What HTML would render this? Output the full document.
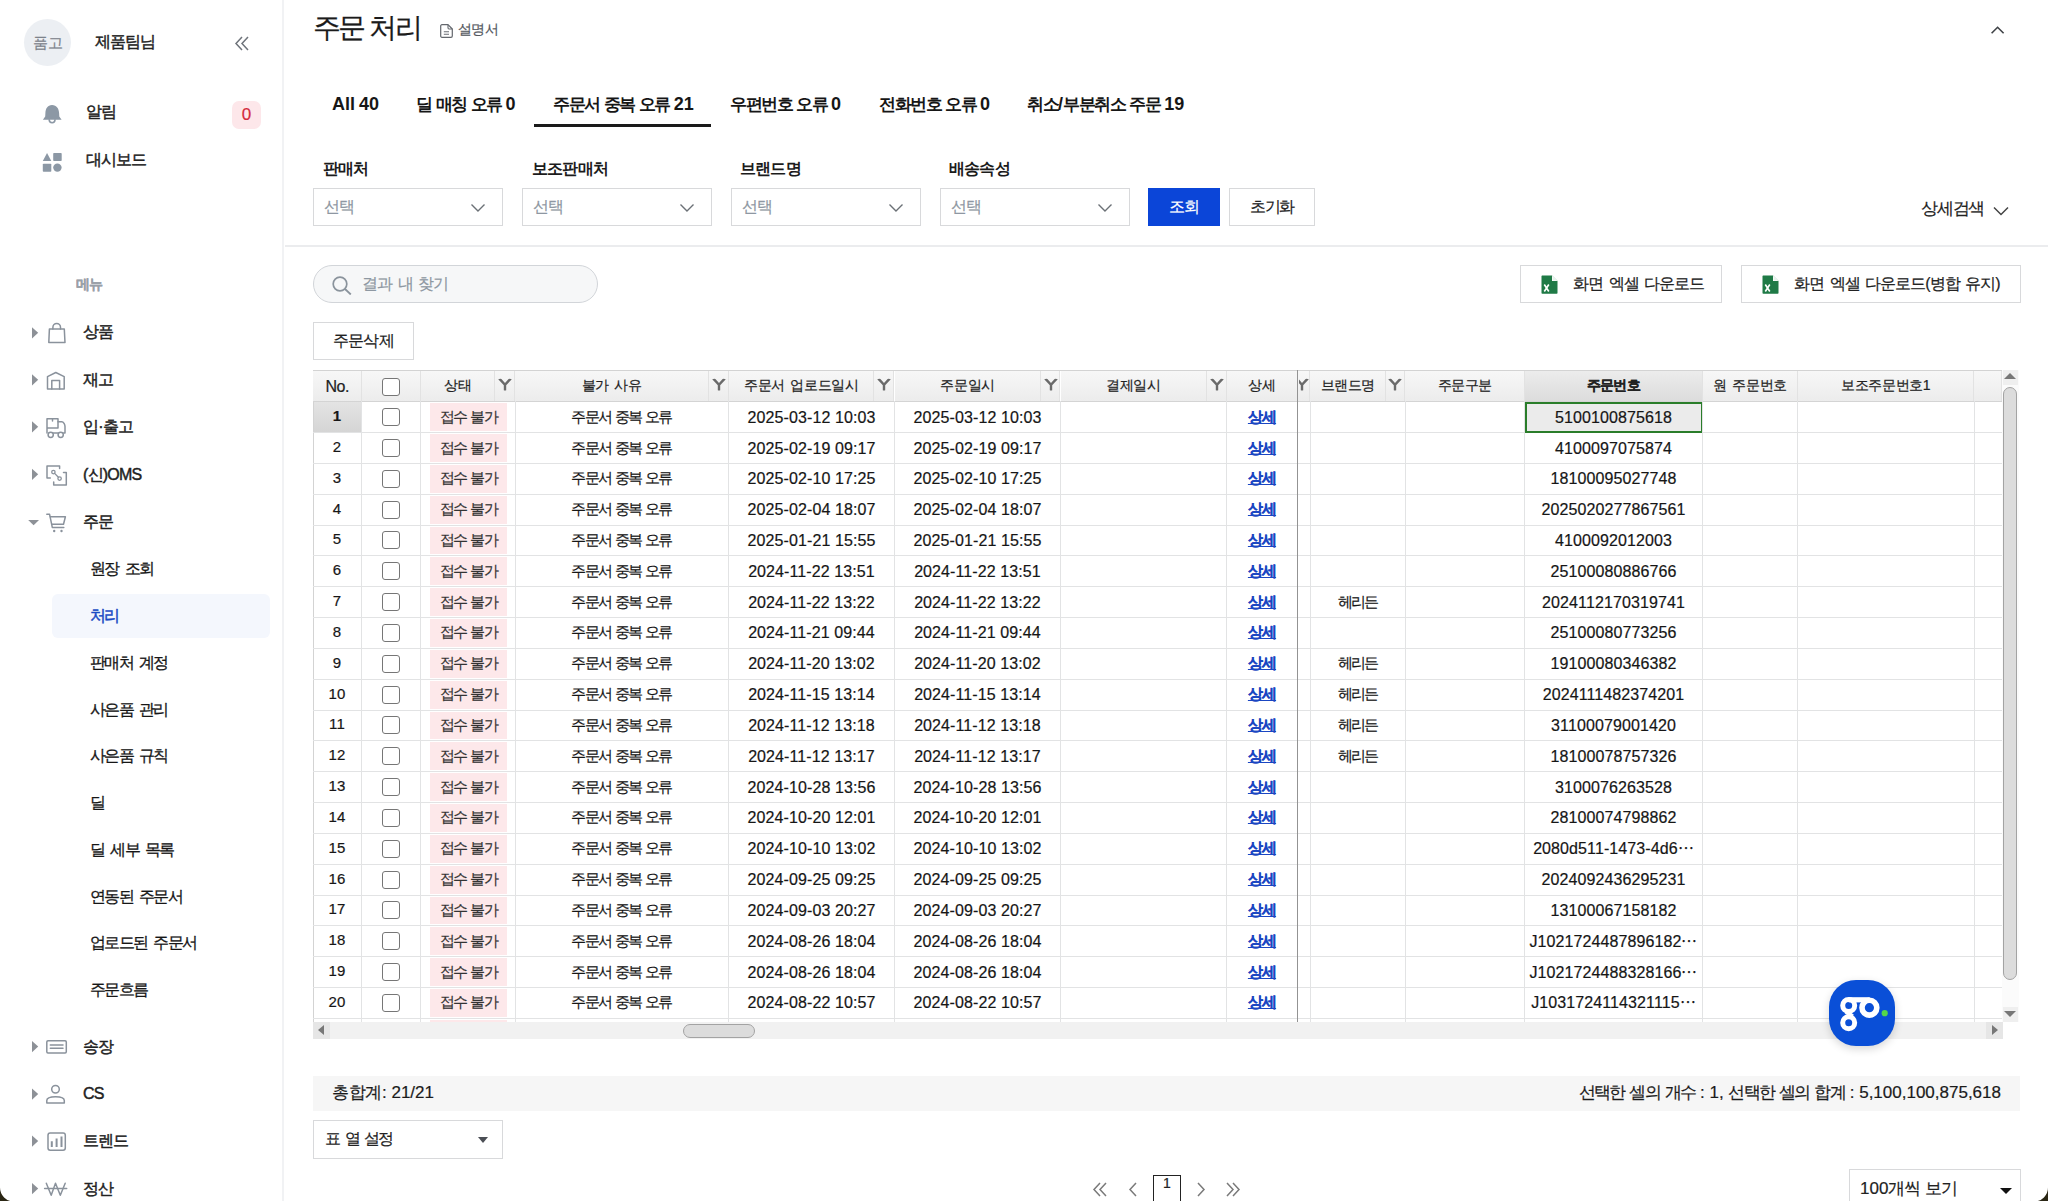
<!DOCTYPE html>
<html lang="ko"><head><meta charset="utf-8"><title>주문 처리</title>
<style>
*{box-sizing:border-box;margin:0;padding:0}
html,body{width:2048px;height:1201px;overflow:hidden;background:#fff}
body{font-family:"Liberation Sans",sans-serif;color:#1d1d1f;position:relative;-webkit-text-stroke:0.2px currentColor}
.a{position:absolute;white-space:nowrap}
.ko{letter-spacing:-0.06em}
.sb{position:absolute;left:0;top:0;width:284px;height:1201px;background:#fff;border-right:2px solid #f1f2f4}
.mi{position:absolute;-webkit-text-stroke:0.45px #222;left:83px;font-size:16px;font-weight:normal;color:#222;letter-spacing:-0.05em;line-height:20px}
.si{position:absolute;-webkit-text-stroke:0.3px currentColor;left:90px;font-size:16px;color:#161616;letter-spacing:-0.1em;word-spacing:3px;line-height:20px}
.tri{position:absolute;left:32px;width:0;height:0;border-top:5.5px solid transparent;border-bottom:5.5px solid transparent;border-left:6px solid #8b8f96}
.ic{position:absolute;left:45px}
.tab{position:absolute;-webkit-text-stroke:0;top:93px;font-size:18px;font-weight:bold;color:#161616;line-height:22px;word-spacing:-1px}
.lbl{position:absolute;-webkit-text-stroke:0;top:159px;font-size:16px;font-weight:bold;color:#1b1b1b;letter-spacing:-0.05em;line-height:20px}
.sel{position:absolute;top:188px;width:190px;height:38px;border:1.5px solid #d8d9db;background:#fff}
.sel span{position:absolute;left:10px;top:8px;font-size:16px;color:#8e97a2;letter-spacing:-0.05em;line-height:20px}
.sel svg{position:absolute;right:16px;top:14px}
.btn{position:absolute;border:1.5px solid #d8d9db;background:#fff;font-size:16px;color:#222;letter-spacing:-0.06em;word-spacing:2px;text-align:center}
.hc{position:absolute;top:371px;height:30px;background:linear-gradient(#f7f7f7,#ececec);border-right:1px solid #e2e2e2}
.ht{position:absolute;top:376px;font-size:14px;color:#222;letter-spacing:-0.03em;word-spacing:2px;line-height:18px;text-align:center}
.flt{position:absolute;top:378px}
.vl{position:absolute;width:1px;background:#e2e3e4}
.hl{position:absolute;height:1px;background:#e2e3e4}
.cb{position:absolute;width:18px;height:18px;border:1.3px solid #767676;border-radius:3px;background:#fff}
.bdg{position:absolute;left:430px;width:77px;background:#fde8ea}
.td{position:absolute;font-size:15px;color:#161616;letter-spacing:-0.113em;word-spacing:1px;line-height:18px;text-align:center}
.dt{position:absolute;font-size:16px;color:#161616;line-height:18px;text-align:center;letter-spacing:0.1px;margin-top:1px}
.lnk{position:absolute;left:1226px;width:72px;text-align:center;font-size:15px;font-weight:bold;color:#1a46c2;text-decoration:underline;letter-spacing:-0.06em;line-height:18px}
</style></head><body>

<div class="sb">
<div class="a" style="left:24px;top:19px;width:47px;height:47px;border-radius:50%;background:#eceff3"></div>
<div class="a" style="left:24px;top:33px;width:47px;text-align:center;font-size:15px;color:#7d838b;letter-spacing:-0.05em;line-height:20px">품고</div>
<div class="a" style="-webkit-text-stroke:0.45px #222;left:95px;top:32px;font-size:16px;color:#222;letter-spacing:-0.07em;line-height:20px">제품팀님</div>
<svg class="a" style="left:234px;top:36px" width="16" height="15" viewBox="0 0 16 15"><path d="M8 1 L2 7.5 L8 14 M14 1 L8 7.5 L14 14" fill="none" stroke="#6f747b" stroke-width="1.5"/></svg>
<div class="a" style="-webkit-text-stroke:0.45px #222;left:86px;top:102px;font-size:16px;color:#222;letter-spacing:-0.07em;line-height:20px">알림</div>
<div class="a" style="left:232px;top:101px;width:29px;height:28px;border-radius:7px;background:#fde7ea;color:#d42a3c;font-size:17px;text-align:center;line-height:28px">0</div>
<div class="a" style="-webkit-text-stroke:0.45px #222;left:86px;top:150px;font-size:16px;color:#222;letter-spacing:-0.07em;line-height:20px">대시보드</div>
<div class="a" style="left:76px;top:275px;font-size:14px;font-weight:bold;color:#9aa0a8;letter-spacing:-0.05em;line-height:18px">메뉴</div>
<div class="mi" style="top:322px">상품</div>
<div class="mi" style="top:370px">재고</div>
<div class="mi" style="top:417px">입·출고</div>
<div class="mi" style="top:465px">(신)OMS</div>
<div class="mi" style="top:512px">주문</div>
<div class="a" style="left:52px;top:594px;width:218px;height:44px;border-radius:6px;background:#f4f7fd"></div>
<div class="si" style="top:558.5px">원장 조회</div>
<div class="si" style="top:605.5px;color:#1a4cc4;-webkit-text-stroke:0.5px #1a4cc4">처리</div>
<div class="si" style="top:652.5px">판매처 계정</div>
<div class="si" style="top:699.5px">사은품 관리</div>
<div class="si" style="top:745.5px">사은품 규칙</div>
<div class="si" style="top:792.5px">딜</div>
<div class="si" style="top:839.5px">딜 세부 목록</div>
<div class="si" style="top:886.5px">연동된 주문서</div>
<div class="si" style="top:932.5px">업로드된 주문서</div>
<div class="si" style="top:979.5px">주문흐름</div>
<div class="mi" style="top:1037px">송장</div>
<div class="mi" style="top:1084px">CS</div>
<div class="mi" style="top:1131px">트렌드</div>
<div class="mi" style="top:1179px">정산</div>
<svg class="a" style="left:0;top:0" width="284" height="1201" viewBox="0 0 284 1201" fill="none" stroke="#8a929c" stroke-width="1.5" stroke-linejoin="round" stroke-linecap="round">
<g stroke="none" fill="#8c98a5">
<path d="M52 105 C47.5 105 45.6 108.8 45.4 113 L45.2 116.6 L42.9 119.8 L61.6 119.8 L59.3 116.6 L59.1 113 C58.9 108.8 56.7 105 52 105 Z"/>
<path d="M42.8 161 L47.05 153 L51.3 161 Z"/>
<rect x="53.2" y="153" width="8.5" height="8" rx="0.8"/>
<rect x="42.8" y="163.7" width="8.5" height="8" rx="0.8"/>
<circle cx="57.4" cy="167.6" r="4.2"/>
</g>
<path d="M49.2 119.8 A2.9 2.9 0 0 0 55 119.8" stroke="#8c98a5" stroke-width="1.6"/>
<g stroke="none"><path d="M32 327.2 L38.2 332.79999999999995 L32 338.4 Z" fill="#8d9197"/><path d="M32 374.2 L38.2 379.79999999999995 L32 385.4 Z" fill="#8d9197"/><path d="M32 421.2 L38.2 426.79999999999995 L32 432.4 Z" fill="#8d9197"/><path d="M32 468.7 L38.2 474.29999999999995 L32 479.9 Z" fill="#8d9197"/><path d="M32 1041 L38.2 1046.6 L32 1052.2 Z" fill="#8d9197"/><path d="M32 1088.5 L38.2 1094.1 L32 1099.7 Z" fill="#8d9197"/><path d="M32 1135.5 L38.2 1141.1 L32 1146.7 Z" fill="#8d9197"/><path d="M32 1183 L38.2 1188.6 L32 1194.2 Z" fill="#8d9197"/>
<path d="M28.2 520 L39 520 L33.6 525.2 Z" fill="#8d9197"/></g>
<path d="M49.4 329 L64.3 329 L65 342.6 L48.8 342.6 Z"/>
<path d="M52.9 329 L52.9 327.2 A3.8 3.8 0 0 1 60.5 327.2 L60.5 329"/>
<path d="M47.5 389 L47.5 376.6 L55.8 372.5 L64.2 376.6 L64.2 389 Z"/>
<path d="M51.8 389 L51.8 380.5 L59.6 380.5 L59.6 389"/>
<path d="M47 433 L47 418.8 L58 418.8 L58 428 L47 428"/>
<path d="M52.5 418.8 L52.5 421"/>
<path d="M58 421.8 L61.8 421.8 C63.5 421.8 65 424.5 65 426.5 L65 433 L63.6 433"/>
<path d="M53.4 433 L58 433"/>
<circle cx="50.7" cy="434.8" r="2.6"/>
<circle cx="60.7" cy="434.8" r="2.6"/>
<path d="M50.3 478 L47 478 L47 466 L59.6 466 L59.6 468.5"/>
<path d="M63.5 472.4 L66.3 472.4 L66.3 485 L53.7 485 L53.7 482"/>
<circle cx="53.4" cy="472.1" r="1.7" stroke-width="1.3"/>
<circle cx="59.6" cy="478.6" r="1.7" stroke-width="1.3"/>
<path d="M54.6 473.4 L58.4 477.3" stroke-width="1.3"/>
<path d="M46.8 514.3 L49.6 514.3 L52.3 527.4 L63.8 527.4"/>
<path d="M50.3 516.8 L65.4 516.8 L63.5 524.2 L51.8 524.2"/>
<circle cx="54.2" cy="531" r="1.2" fill="#8a929c" stroke="none"/>
<circle cx="61.5" cy="531" r="1.2" fill="#8a929c" stroke="none"/>
<rect x="46.8" y="1040.7" width="19.5" height="12.3" rx="1.2"/>
<path d="M50.3 1044.9 L63 1044.9 M50.3 1048.3 L63 1048.3"/>
<circle cx="55.5" cy="1089.3" r="3.8"/>
<path d="M46.8 1103 L46.8 1100.5 C46.8 1097.8 50 1096.7 55.6 1096.7 C61.2 1096.7 64.3 1097.8 64.3 1100.5 L64.3 1103 Z"/>
<rect x="48" y="1133" width="17.3" height="17.3" rx="2.2"/>
<path d="M51.8 1147 L51.8 1141.3 M56.6 1147 L56.6 1138.5 M61.5 1147 L61.5 1136.5" stroke-width="2" stroke-linecap="butt"/>
<path d="M46.3 1183.3 L51.2 1195.2 L55.5 1183.3 L60.3 1195.2 L65.2 1183.3"/>
<path d="M44.6 1188.6 L66.7 1188.6"/>
</svg>
</div>
<div class="a" style="left:313px;top:12px;font-size:28px;color:#1b1b1b;letter-spacing:-0.1em;word-spacing:1px;line-height:32px">주문 처리</div>
<svg class="a" style="left:440px;top:24px" width="13" height="14" viewBox="0 0 13 14"><path d="M0.7 2 C0.7 1.2 1.2 0.7 2 0.7 L8 0.7 L12.3 5 L12.3 12 C12.3 12.8 11.8 13.3 11 13.3 L2 13.3 C1.2 13.3 0.7 12.8 0.7 12 Z" fill="none" stroke="#63676d" stroke-width="1.2" stroke-linejoin="round"/><path d="M8 0.7 L8 3.8 C8 4.4 8.4 5 9 5 L12.3 5" fill="none" stroke="#63676d" stroke-width="1.1"/><path d="M3.8 7.8 L9 7.8 M3.8 10.2 L9 10.2" stroke="#6a6e74" stroke-width="1.1"/></svg>
<div class="a" style="left:458px;top:20px;font-size:14px;color:#55595f;letter-spacing:-0.05em;line-height:18px">설명서</div>
<svg class="a" style="left:1990px;top:25px" width="16" height="10" viewBox="0 0 16 10"><path d="M1.6 8.3 L7.6 2.3 L13.6 8.3" fill="none" stroke="#3f4246" stroke-width="1.6"/></svg>
<div class="tab" style="left:332px">All 40</div>
<div class="tab" style="left:416px"><span style="letter-spacing:-0.09em;font-size:16.5px">딜</span> <span style="letter-spacing:-0.09em;font-size:16.5px">매칭</span> <span style="letter-spacing:-0.09em;font-size:16.5px">오류</span> 0</div>
<div class="tab" style="left:553px"><span style="letter-spacing:-0.09em;font-size:16.5px">주문서</span> <span style="letter-spacing:-0.09em;font-size:16.5px">중복</span> <span style="letter-spacing:-0.09em;font-size:16.5px">오류</span> 21</div>
<div class="tab" style="left:730px"><span style="letter-spacing:-0.09em;font-size:16.5px">우편번호</span> <span style="letter-spacing:-0.09em;font-size:16.5px">오류</span> 0</div>
<div class="tab" style="left:879px"><span style="letter-spacing:-0.09em;font-size:16.5px">전화번호</span> <span style="letter-spacing:-0.09em;font-size:16.5px">오류</span> 0</div>
<div class="tab" style="left:1027px"><span style="letter-spacing:-0.09em;font-size:16.5px">취소</span>/<span style="letter-spacing:-0.09em;font-size:16.5px">부분취소</span> <span style="letter-spacing:-0.09em;font-size:16.5px">주문</span> 19</div>
<div class="a" style="left:534px;top:124px;width:177px;height:3px;background:#1a1a1a"></div>
<div class="lbl" style="left:323px">판매처</div>
<div class="lbl" style="left:532px">보조판매처</div>
<div class="lbl" style="left:740px">브랜드명</div>
<div class="lbl" style="left:949px">배송속성</div>
<div class="sel" style="left:313px"><span>선택</span><svg width="16" height="10" viewBox="0 0 16 10"><path d="M1.5 1.5 L8 8 L14.5 1.5" fill="none" stroke="#6b7076" stroke-width="1.4"/></svg></div>
<div class="sel" style="left:522px"><span>선택</span><svg width="16" height="10" viewBox="0 0 16 10"><path d="M1.5 1.5 L8 8 L14.5 1.5" fill="none" stroke="#6b7076" stroke-width="1.4"/></svg></div>
<div class="sel" style="left:731px"><span>선택</span><svg width="16" height="10" viewBox="0 0 16 10"><path d="M1.5 1.5 L8 8 L14.5 1.5" fill="none" stroke="#6b7076" stroke-width="1.4"/></svg></div>
<div class="sel" style="left:940px"><span>선택</span><svg width="16" height="10" viewBox="0 0 16 10"><path d="M1.5 1.5 L8 8 L14.5 1.5" fill="none" stroke="#6b7076" stroke-width="1.4"/></svg></div>
<div class="a" style="left:1148px;top:188px;width:72px;height:38px;background:#0b45d8;color:#fff;font-size:16px;text-align:center;line-height:38px;letter-spacing:-0.05em">조회</div>
<div class="btn" style="left:1229px;top:188px;width:86px;height:38px;line-height:35px;letter-spacing:-0.1em">초기화</div>
<div class="a" style="left:1921px;top:199px;font-size:17px;color:#222;letter-spacing:-0.07em;line-height:20px">상세검색</div>
<svg class="a" style="left:1993px;top:206px" width="16" height="10" viewBox="0 0 16 10"><path d="M1 1.5 L8 8.5 L15 1.5" fill="none" stroke="#444" stroke-width="1.5"/></svg>
<div class="a" style="left:285px;top:245px;width:1763px;height:2px;background:#ebecee"></div>
<div class="a" style="left:313px;top:265px;width:285px;height:38px;border-radius:19px;border:1.5px solid #d2d5d9;background:#f6f7f8"></div>
<svg class="a" style="left:332px;top:276px" width="20" height="19" viewBox="0 0 20 19"><circle cx="8" cy="8" r="6.8" fill="none" stroke="#8a939c" stroke-width="1.7"/><path d="M13 13 L18.8 18.5" stroke="#8a939c" stroke-width="1.8"/></svg>
<div class="a" style="left:362px;top:274px;font-size:16px;color:#8e98a2;letter-spacing:-0.08em;word-spacing:3px;line-height:20px">결과 내 찾기</div>
<div class="btn" style="left:1520px;top:265px;width:202px;height:38px"><div class="a" style="left:20px;top:9px"><svg width="17" height="19" viewBox="0 0 17 19"><path d="M1.5 0.5 L11 0.5 L16.5 6 L16.5 18 C16.5 18.5 16.2 18.8 15.7 18.8 L1.3 18.8 C0.8 18.8 0.5 18.5 0.5 18 L0.5 1.5 C0.5 0.9 0.9 0.5 1.5 0.5 Z" fill="#1f7a46"/><path d="M11 0.5 L11 6 L16.5 6 Z" fill="#fff"/><path d="M11.6 0.5 L16.5 5.4 L11.6 5.4 Z" fill="#e8f2ec"/><path d="M3.3 9.5 L7.8 16.5 M7.8 9.5 L3.3 16.5" stroke="#fff" stroke-width="1.6"/></svg></div><div class="a" style="left:52px;top:8px;line-height:20px">화면 엑셀 다운로드</div></div>
<div class="btn" style="left:1741px;top:265px;width:280px;height:38px"><div class="a" style="left:20px;top:9px"><svg width="17" height="19" viewBox="0 0 17 19"><path d="M1.5 0.5 L11 0.5 L16.5 6 L16.5 18 C16.5 18.5 16.2 18.8 15.7 18.8 L1.3 18.8 C0.8 18.8 0.5 18.5 0.5 18 L0.5 1.5 C0.5 0.9 0.9 0.5 1.5 0.5 Z" fill="#1f7a46"/><path d="M11 0.5 L11 6 L16.5 6 Z" fill="#fff"/><path d="M11.6 0.5 L16.5 5.4 L11.6 5.4 Z" fill="#e8f2ec"/><path d="M3.3 9.5 L7.8 16.5 M7.8 9.5 L3.3 16.5" stroke="#fff" stroke-width="1.6"/></svg></div><div class="a" style="left:52px;top:8px;line-height:20px">화면 엑셀 다운로드(병합 유지)</div></div>
<div class="btn" style="left:313px;top:322px;width:101px;height:38px;line-height:35px">주문삭제</div>
<div class="a" style="left:313px;top:370px;width:1690px;height:652px;border-left:1px solid #d3d3d3;border-top:1px solid #d3d3d3;overflow:hidden">
</div>
<div class="hc" style="left:313.0px;width:48.5px;background:linear-gradient(#f7f7f7,#ececec)"></div>
<div class="hc" style="left:361.5px;width:59.0px;background:linear-gradient(#f7f7f7,#ececec)"></div>
<div class="hc" style="left:420.5px;width:74.5px;background:linear-gradient(#f7f7f7,#ececec)"></div>
<div class="hc" style="left:495.0px;width:20.0px;background:linear-gradient(#f7f7f7,#ececec)"></div>
<div class="hc" style="left:515.0px;width:193.5px;background:linear-gradient(#f7f7f7,#ececec)"></div>
<div class="hc" style="left:708.5px;width:20.0px;background:linear-gradient(#f7f7f7,#ececec)"></div>
<div class="hc" style="left:728.5px;width:145.7px;background:linear-gradient(#f7f7f7,#ececec)"></div>
<div class="hc" style="left:874.2px;width:20.3px;background:linear-gradient(#f7f7f7,#ececec)"></div>
<div class="hc" style="left:894.5px;width:146.2px;background:linear-gradient(#f7f7f7,#ececec)"></div>
<div class="hc" style="left:1040.7px;width:19.8px;background:linear-gradient(#f7f7f7,#ececec)"></div>
<div class="hc" style="left:1060.5px;width:146.0px;background:linear-gradient(#f7f7f7,#ececec)"></div>
<div class="hc" style="left:1206.5px;width:20.0px;background:linear-gradient(#f7f7f7,#ececec)"></div>
<div class="hc" style="left:1226.5px;width:71.0px;background:linear-gradient(#f7f7f7,#ececec)"></div>
<div class="hc" style="left:1297.5px;width:12.5px;background:linear-gradient(#f7f7f7,#ececec)"></div>
<div class="hc" style="left:1310.0px;width:75.7px;background:linear-gradient(#f7f7f7,#ececec)"></div>
<div class="hc" style="left:1385.7px;width:19.3px;background:linear-gradient(#f7f7f7,#ececec)"></div>
<div class="hc" style="left:1405.0px;width:119.5px;background:linear-gradient(#f7f7f7,#ececec)"></div>
<div class="hc" style="left:1524.5px;width:178.0px;background:linear-gradient(#ececec,#dcdcdc)"></div>
<div class="hc" style="left:1702.5px;width:95.0px;background:linear-gradient(#f7f7f7,#ececec)"></div>
<div class="hc" style="left:1797.5px;width:176.5px;background:linear-gradient(#f7f7f7,#ececec)"></div>
<div class="hc" style="left:1974.0px;width:28.0px;background:linear-gradient(#f7f7f7,#ececec)"></div>
<div class="a" style="left:313px;top:400.5px;width:1689px;height:1px;background:#d4d4d4"></div>
<div class="ht" style="left:313px;width:48.5px;font-size:16px;margin-top:2px;">No.</div>
<div class="ht" style="left:420.5px;width:74.5px;">상태</div>
<div class="ht" style="left:515px;width:193.5px;">불가 사유</div>
<div class="ht" style="left:728.5px;width:145.7px;">주문서 업로드일시</div>
<div class="ht" style="left:894.5px;width:146.2px;">주문일시</div>
<div class="ht" style="left:1060.5px;width:146.0px;">결제일시</div>
<div class="ht" style="left:1226.5px;width:71.0px;">상세</div>
<div class="ht" style="left:1310px;width:75.7px;">브랜드명</div>
<div class="ht" style="left:1405px;width:119.5px;">주문구분</div>
<div class="ht" style="left:1524.5px;width:178.0px;font-weight:bold;letter-spacing:-0.06em;">주문번호</div>
<div class="ht" style="left:1702.5px;width:95.0px;">원 주문번호</div>
<div class="ht" style="left:1797.5px;width:176.5px;">보조주문번호1</div>
<svg class="flt" style="left:498.0px" width="14" height="14" viewBox="0 0 14 14"><path d="M0.2 1.3 Q1.8 0.5 3.4 0.9 L7 4.9 L10.6 0.9 Q12.2 0.5 13.8 1.3 L8.2 7.2 L8.2 12.2 Q7 12.8 5.8 12.2 L5.8 7.2 Z" fill="#6a6a6a"/></svg>
<svg class="flt" style="left:711.5px" width="14" height="14" viewBox="0 0 14 14"><path d="M0.2 1.3 Q1.8 0.5 3.4 0.9 L7 4.9 L10.6 0.9 Q12.2 0.5 13.8 1.3 L8.2 7.2 L8.2 12.2 Q7 12.8 5.8 12.2 L5.8 7.2 Z" fill="#6a6a6a"/></svg>
<svg class="flt" style="left:877.3px" width="14" height="14" viewBox="0 0 14 14"><path d="M0.2 1.3 Q1.8 0.5 3.4 0.9 L7 4.9 L10.6 0.9 Q12.2 0.5 13.8 1.3 L8.2 7.2 L8.2 12.2 Q7 12.8 5.8 12.2 L5.8 7.2 Z" fill="#6a6a6a"/></svg>
<svg class="flt" style="left:1043.6px" width="14" height="14" viewBox="0 0 14 14"><path d="M0.2 1.3 Q1.8 0.5 3.4 0.9 L7 4.9 L10.6 0.9 Q12.2 0.5 13.8 1.3 L8.2 7.2 L8.2 12.2 Q7 12.8 5.8 12.2 L5.8 7.2 Z" fill="#6a6a6a"/></svg>
<svg class="flt" style="left:1209.5px" width="14" height="14" viewBox="0 0 14 14"><path d="M0.2 1.3 Q1.8 0.5 3.4 0.9 L7 4.9 L10.6 0.9 Q12.2 0.5 13.8 1.3 L8.2 7.2 L8.2 12.2 Q7 12.8 5.8 12.2 L5.8 7.2 Z" fill="#6a6a6a"/></svg>
<svg class="flt" style="left:1388.3px" width="14" height="14" viewBox="0 0 14 14"><path d="M0.2 1.3 Q1.8 0.5 3.4 0.9 L7 4.9 L10.6 0.9 Q12.2 0.5 13.8 1.3 L8.2 7.2 L8.2 12.2 Q7 12.8 5.8 12.2 L5.8 7.2 Z" fill="#6a6a6a"/></svg>
<div class="a" style="left:1298.5px;top:371px;width:11px;height:30px;overflow:hidden"><svg class="a" style="left:-3.5px;top:7px" width="14" height="14" viewBox="0 0 14 14"><path d="M0.2 1.3 Q1.8 0.5 3.4 0.9 L7 4.9 L10.6 0.9 Q12.2 0.5 13.8 1.3 L8.2 7.2 L8.2 12.2 Q7 12.8 5.8 12.2 L5.8 7.2 Z" fill="#6a6a6a"/></svg></div>
<div class="cb" style="left:382px;top:378px"></div>
<div class="hl" style="left:313px;top:432.08px;width:1689px"></div>
<div class="a" style="left:314px;top:402.25px;width:47px;height:29.83px;background:linear-gradient(#e4e4e4,#d5d5d5)"></div>
<div class="a" style="left:1524.5px;top:402.25px;width:178px;height:30.33px;background:#ebebeb;border:2px solid #2a7d2a"></div>
<div class="bdg" style="top:403.25px;height:27.83px"></div>
<div class="dt" style="left:313px;width:48px;top:406.17px;font-size:15px;font-weight:bold;">1</div>
<div class="cb" style="left:382px;top:408.17px"></div>
<div class="td" style="left:430px;width:77px;top:407.67px;color:#333">접수 불가</div>
<div class="td" style="left:515px;width:213px;top:407.67px">주문서 중복 오류</div>
<div class="dt" style="left:728.5px;width:166px;top:407.67px">2025-03-12 10:03</div>
<div class="dt" style="left:894.5px;width:166px;top:407.67px">2025-03-12 10:03</div>
<div class="lnk" style="top:407.67px">상세</div>
<div class="dt" style="left:1524.5px;width:178px;top:407.67px">5100100875618</div>
<div class="hl" style="left:313px;top:462.91px;width:1689px"></div>
<div class="bdg" style="top:434.08px;height:27.83px"></div>
<div class="dt" style="left:313px;width:48px;top:437.00px;font-size:15px;">2</div>
<div class="cb" style="left:382px;top:439.00px"></div>
<div class="td" style="left:430px;width:77px;top:438.50px;color:#333">접수 불가</div>
<div class="td" style="left:515px;width:213px;top:438.50px">주문서 중복 오류</div>
<div class="dt" style="left:728.5px;width:166px;top:438.50px">2025-02-19 09:17</div>
<div class="dt" style="left:894.5px;width:166px;top:438.50px">2025-02-19 09:17</div>
<div class="lnk" style="top:438.50px">상세</div>
<div class="dt" style="left:1524.5px;width:178px;top:438.50px">4100097075874</div>
<div class="hl" style="left:313px;top:493.74px;width:1689px"></div>
<div class="bdg" style="top:464.91px;height:27.83px"></div>
<div class="dt" style="left:313px;width:48px;top:467.82px;font-size:15px;">3</div>
<div class="cb" style="left:382px;top:469.82px"></div>
<div class="td" style="left:430px;width:77px;top:469.32px;color:#333">접수 불가</div>
<div class="td" style="left:515px;width:213px;top:469.32px">주문서 중복 오류</div>
<div class="dt" style="left:728.5px;width:166px;top:469.32px">2025-02-10 17:25</div>
<div class="dt" style="left:894.5px;width:166px;top:469.32px">2025-02-10 17:25</div>
<div class="lnk" style="top:469.32px">상세</div>
<div class="dt" style="left:1524.5px;width:178px;top:469.32px">18100095027748</div>
<div class="hl" style="left:313px;top:524.57px;width:1689px"></div>
<div class="bdg" style="top:495.74px;height:27.83px"></div>
<div class="dt" style="left:313px;width:48px;top:498.66px;font-size:15px;">4</div>
<div class="cb" style="left:382px;top:500.66px"></div>
<div class="td" style="left:430px;width:77px;top:500.16px;color:#333">접수 불가</div>
<div class="td" style="left:515px;width:213px;top:500.16px">주문서 중복 오류</div>
<div class="dt" style="left:728.5px;width:166px;top:500.16px">2025-02-04 18:07</div>
<div class="dt" style="left:894.5px;width:166px;top:500.16px">2025-02-04 18:07</div>
<div class="lnk" style="top:500.16px">상세</div>
<div class="dt" style="left:1524.5px;width:178px;top:500.16px">2025020277867561</div>
<div class="hl" style="left:313px;top:555.40px;width:1689px"></div>
<div class="bdg" style="top:526.57px;height:27.83px"></div>
<div class="dt" style="left:313px;width:48px;top:529.48px;font-size:15px;">5</div>
<div class="cb" style="left:382px;top:531.48px"></div>
<div class="td" style="left:430px;width:77px;top:530.98px;color:#333">접수 불가</div>
<div class="td" style="left:515px;width:213px;top:530.98px">주문서 중복 오류</div>
<div class="dt" style="left:728.5px;width:166px;top:530.98px">2025-01-21 15:55</div>
<div class="dt" style="left:894.5px;width:166px;top:530.98px">2025-01-21 15:55</div>
<div class="lnk" style="top:530.98px">상세</div>
<div class="dt" style="left:1524.5px;width:178px;top:530.98px">4100092012003</div>
<div class="hl" style="left:313px;top:586.23px;width:1689px"></div>
<div class="bdg" style="top:557.40px;height:27.83px"></div>
<div class="dt" style="left:313px;width:48px;top:560.31px;font-size:15px;">6</div>
<div class="cb" style="left:382px;top:562.31px"></div>
<div class="td" style="left:430px;width:77px;top:561.81px;color:#333">접수 불가</div>
<div class="td" style="left:515px;width:213px;top:561.81px">주문서 중복 오류</div>
<div class="dt" style="left:728.5px;width:166px;top:561.81px">2024-11-22 13:51</div>
<div class="dt" style="left:894.5px;width:166px;top:561.81px">2024-11-22 13:51</div>
<div class="lnk" style="top:561.81px">상세</div>
<div class="dt" style="left:1524.5px;width:178px;top:561.81px">25100080886766</div>
<div class="hl" style="left:313px;top:617.06px;width:1689px"></div>
<div class="bdg" style="top:588.23px;height:27.83px"></div>
<div class="dt" style="left:313px;width:48px;top:591.14px;font-size:15px;">7</div>
<div class="cb" style="left:382px;top:593.14px"></div>
<div class="td" style="left:430px;width:77px;top:592.64px;color:#333">접수 불가</div>
<div class="td" style="left:515px;width:213px;top:592.64px">주문서 중복 오류</div>
<div class="dt" style="left:728.5px;width:166px;top:592.64px">2024-11-22 13:22</div>
<div class="dt" style="left:894.5px;width:166px;top:592.64px">2024-11-22 13:22</div>
<div class="lnk" style="top:592.64px">상세</div>
<div class="td" style="left:1310px;width:95px;top:592.64px">헤리든</div>
<div class="dt" style="left:1524.5px;width:178px;top:592.64px">2024112170319741</div>
<div class="hl" style="left:313px;top:647.89px;width:1689px"></div>
<div class="bdg" style="top:619.06px;height:27.83px"></div>
<div class="dt" style="left:313px;width:48px;top:621.97px;font-size:15px;">8</div>
<div class="cb" style="left:382px;top:623.97px"></div>
<div class="td" style="left:430px;width:77px;top:623.47px;color:#333">접수 불가</div>
<div class="td" style="left:515px;width:213px;top:623.47px">주문서 중복 오류</div>
<div class="dt" style="left:728.5px;width:166px;top:623.47px">2024-11-21 09:44</div>
<div class="dt" style="left:894.5px;width:166px;top:623.47px">2024-11-21 09:44</div>
<div class="lnk" style="top:623.47px">상세</div>
<div class="dt" style="left:1524.5px;width:178px;top:623.47px">25100080773256</div>
<div class="hl" style="left:313px;top:678.72px;width:1689px"></div>
<div class="bdg" style="top:649.89px;height:27.83px"></div>
<div class="dt" style="left:313px;width:48px;top:652.80px;font-size:15px;">9</div>
<div class="cb" style="left:382px;top:654.80px"></div>
<div class="td" style="left:430px;width:77px;top:654.30px;color:#333">접수 불가</div>
<div class="td" style="left:515px;width:213px;top:654.30px">주문서 중복 오류</div>
<div class="dt" style="left:728.5px;width:166px;top:654.30px">2024-11-20 13:02</div>
<div class="dt" style="left:894.5px;width:166px;top:654.30px">2024-11-20 13:02</div>
<div class="lnk" style="top:654.30px">상세</div>
<div class="td" style="left:1310px;width:95px;top:654.30px">헤리든</div>
<div class="dt" style="left:1524.5px;width:178px;top:654.30px">19100080346382</div>
<div class="hl" style="left:313px;top:709.55px;width:1689px"></div>
<div class="bdg" style="top:680.72px;height:27.83px"></div>
<div class="dt" style="left:313px;width:48px;top:683.63px;font-size:15px;">10</div>
<div class="cb" style="left:382px;top:685.63px"></div>
<div class="td" style="left:430px;width:77px;top:685.13px;color:#333">접수 불가</div>
<div class="td" style="left:515px;width:213px;top:685.13px">주문서 중복 오류</div>
<div class="dt" style="left:728.5px;width:166px;top:685.13px">2024-11-15 13:14</div>
<div class="dt" style="left:894.5px;width:166px;top:685.13px">2024-11-15 13:14</div>
<div class="lnk" style="top:685.13px">상세</div>
<div class="td" style="left:1310px;width:95px;top:685.13px">헤리든</div>
<div class="dt" style="left:1524.5px;width:178px;top:685.13px">2024111482374201</div>
<div class="hl" style="left:313px;top:740.38px;width:1689px"></div>
<div class="bdg" style="top:711.55px;height:27.83px"></div>
<div class="dt" style="left:313px;width:48px;top:714.46px;font-size:15px;">11</div>
<div class="cb" style="left:382px;top:716.46px"></div>
<div class="td" style="left:430px;width:77px;top:715.96px;color:#333">접수 불가</div>
<div class="td" style="left:515px;width:213px;top:715.96px">주문서 중복 오류</div>
<div class="dt" style="left:728.5px;width:166px;top:715.96px">2024-11-12 13:18</div>
<div class="dt" style="left:894.5px;width:166px;top:715.96px">2024-11-12 13:18</div>
<div class="lnk" style="top:715.96px">상세</div>
<div class="td" style="left:1310px;width:95px;top:715.96px">헤리든</div>
<div class="dt" style="left:1524.5px;width:178px;top:715.96px">31100079001420</div>
<div class="hl" style="left:313px;top:771.21px;width:1689px"></div>
<div class="bdg" style="top:742.38px;height:27.83px"></div>
<div class="dt" style="left:313px;width:48px;top:745.29px;font-size:15px;">12</div>
<div class="cb" style="left:382px;top:747.29px"></div>
<div class="td" style="left:430px;width:77px;top:746.79px;color:#333">접수 불가</div>
<div class="td" style="left:515px;width:213px;top:746.79px">주문서 중복 오류</div>
<div class="dt" style="left:728.5px;width:166px;top:746.79px">2024-11-12 13:17</div>
<div class="dt" style="left:894.5px;width:166px;top:746.79px">2024-11-12 13:17</div>
<div class="lnk" style="top:746.79px">상세</div>
<div class="td" style="left:1310px;width:95px;top:746.79px">헤리든</div>
<div class="dt" style="left:1524.5px;width:178px;top:746.79px">18100078757326</div>
<div class="hl" style="left:313px;top:802.04px;width:1689px"></div>
<div class="bdg" style="top:773.21px;height:27.83px"></div>
<div class="dt" style="left:313px;width:48px;top:776.12px;font-size:15px;">13</div>
<div class="cb" style="left:382px;top:778.12px"></div>
<div class="td" style="left:430px;width:77px;top:777.62px;color:#333">접수 불가</div>
<div class="td" style="left:515px;width:213px;top:777.62px">주문서 중복 오류</div>
<div class="dt" style="left:728.5px;width:166px;top:777.62px">2024-10-28 13:56</div>
<div class="dt" style="left:894.5px;width:166px;top:777.62px">2024-10-28 13:56</div>
<div class="lnk" style="top:777.62px">상세</div>
<div class="dt" style="left:1524.5px;width:178px;top:777.62px">3100076263528</div>
<div class="hl" style="left:313px;top:832.87px;width:1689px"></div>
<div class="bdg" style="top:804.04px;height:27.83px"></div>
<div class="dt" style="left:313px;width:48px;top:806.95px;font-size:15px;">14</div>
<div class="cb" style="left:382px;top:808.95px"></div>
<div class="td" style="left:430px;width:77px;top:808.45px;color:#333">접수 불가</div>
<div class="td" style="left:515px;width:213px;top:808.45px">주문서 중복 오류</div>
<div class="dt" style="left:728.5px;width:166px;top:808.45px">2024-10-20 12:01</div>
<div class="dt" style="left:894.5px;width:166px;top:808.45px">2024-10-20 12:01</div>
<div class="lnk" style="top:808.45px">상세</div>
<div class="dt" style="left:1524.5px;width:178px;top:808.45px">28100074798862</div>
<div class="hl" style="left:313px;top:863.70px;width:1689px"></div>
<div class="bdg" style="top:834.87px;height:27.83px"></div>
<div class="dt" style="left:313px;width:48px;top:837.78px;font-size:15px;">15</div>
<div class="cb" style="left:382px;top:839.78px"></div>
<div class="td" style="left:430px;width:77px;top:839.28px;color:#333">접수 불가</div>
<div class="td" style="left:515px;width:213px;top:839.28px">주문서 중복 오류</div>
<div class="dt" style="left:728.5px;width:166px;top:839.28px">2024-10-10 13:02</div>
<div class="dt" style="left:894.5px;width:166px;top:839.28px">2024-10-10 13:02</div>
<div class="lnk" style="top:839.28px">상세</div>
<div class="dt" style="left:1524.5px;width:178px;top:839.28px">2080d511-1473-4d6⋯</div>
<div class="hl" style="left:313px;top:894.53px;width:1689px"></div>
<div class="bdg" style="top:865.70px;height:27.83px"></div>
<div class="dt" style="left:313px;width:48px;top:868.62px;font-size:15px;">16</div>
<div class="cb" style="left:382px;top:870.62px"></div>
<div class="td" style="left:430px;width:77px;top:870.12px;color:#333">접수 불가</div>
<div class="td" style="left:515px;width:213px;top:870.12px">주문서 중복 오류</div>
<div class="dt" style="left:728.5px;width:166px;top:870.12px">2024-09-25 09:25</div>
<div class="dt" style="left:894.5px;width:166px;top:870.12px">2024-09-25 09:25</div>
<div class="lnk" style="top:870.12px">상세</div>
<div class="dt" style="left:1524.5px;width:178px;top:870.12px">2024092436295231</div>
<div class="hl" style="left:313px;top:925.36px;width:1689px"></div>
<div class="bdg" style="top:896.53px;height:27.83px"></div>
<div class="dt" style="left:313px;width:48px;top:899.44px;font-size:15px;">17</div>
<div class="cb" style="left:382px;top:901.44px"></div>
<div class="td" style="left:430px;width:77px;top:900.94px;color:#333">접수 불가</div>
<div class="td" style="left:515px;width:213px;top:900.94px">주문서 중복 오류</div>
<div class="dt" style="left:728.5px;width:166px;top:900.94px">2024-09-03 20:27</div>
<div class="dt" style="left:894.5px;width:166px;top:900.94px">2024-09-03 20:27</div>
<div class="lnk" style="top:900.94px">상세</div>
<div class="dt" style="left:1524.5px;width:178px;top:900.94px">13100067158182</div>
<div class="hl" style="left:313px;top:956.19px;width:1689px"></div>
<div class="bdg" style="top:927.36px;height:27.83px"></div>
<div class="dt" style="left:313px;width:48px;top:930.27px;font-size:15px;">18</div>
<div class="cb" style="left:382px;top:932.27px"></div>
<div class="td" style="left:430px;width:77px;top:931.77px;color:#333">접수 불가</div>
<div class="td" style="left:515px;width:213px;top:931.77px">주문서 중복 오류</div>
<div class="dt" style="left:728.5px;width:166px;top:931.77px">2024-08-26 18:04</div>
<div class="dt" style="left:894.5px;width:166px;top:931.77px">2024-08-26 18:04</div>
<div class="lnk" style="top:931.77px">상세</div>
<div class="dt" style="left:1524.5px;width:178px;top:931.77px">J1021724487896182⋯</div>
<div class="hl" style="left:313px;top:987.02px;width:1689px"></div>
<div class="bdg" style="top:958.19px;height:27.83px"></div>
<div class="dt" style="left:313px;width:48px;top:961.10px;font-size:15px;">19</div>
<div class="cb" style="left:382px;top:963.10px"></div>
<div class="td" style="left:430px;width:77px;top:962.60px;color:#333">접수 불가</div>
<div class="td" style="left:515px;width:213px;top:962.60px">주문서 중복 오류</div>
<div class="dt" style="left:728.5px;width:166px;top:962.60px">2024-08-26 18:04</div>
<div class="dt" style="left:894.5px;width:166px;top:962.60px">2024-08-26 18:04</div>
<div class="lnk" style="top:962.60px">상세</div>
<div class="dt" style="left:1524.5px;width:178px;top:962.60px">J1021724488328166⋯</div>
<div class="hl" style="left:313px;top:1017.85px;width:1689px"></div>
<div class="bdg" style="top:989.02px;height:27.83px"></div>
<div class="dt" style="left:313px;width:48px;top:991.93px;font-size:15px;">20</div>
<div class="cb" style="left:382px;top:993.93px"></div>
<div class="td" style="left:430px;width:77px;top:993.43px;color:#333">접수 불가</div>
<div class="td" style="left:515px;width:213px;top:993.43px">주문서 중복 오류</div>
<div class="dt" style="left:728.5px;width:166px;top:993.43px">2024-08-22 10:57</div>
<div class="dt" style="left:894.5px;width:166px;top:993.43px">2024-08-22 10:57</div>
<div class="lnk" style="top:993.43px">상세</div>
<div class="dt" style="left:1524.5px;width:178px;top:993.43px">J1031724114321115⋯</div>
<div class="bdg" style="top:1019.85px;height:3px"></div>
<div class="vl" style="left:361.0px;top:401px;height:621px"></div>
<div class="vl" style="left:420.0px;top:401px;height:621px"></div>
<div class="vl" style="left:514.5px;top:401px;height:621px"></div>
<div class="vl" style="left:728.0px;top:401px;height:621px"></div>
<div class="vl" style="left:894.0px;top:401px;height:621px"></div>
<div class="vl" style="left:1060.0px;top:401px;height:621px"></div>
<div class="vl" style="left:1226.0px;top:401px;height:621px"></div>
<div class="a" style="left:1296.8px;top:370px;width:1.6px;height:652px;background:#939393"></div>
<div class="vl" style="left:1309.5px;top:401px;height:621px"></div>
<div class="vl" style="left:1404.5px;top:401px;height:621px"></div>
<div class="vl" style="left:1524.0px;top:401px;height:621px"></div>
<div class="vl" style="left:1702.0px;top:401px;height:621px"></div>
<div class="vl" style="left:1797.0px;top:401px;height:621px"></div>
<div class="vl" style="left:1973.5px;top:401px;height:621px"></div>
<div class="vl" style="left:2001.5px;top:370px;height:652px;background:#e3e5e8"></div>
<div class="a" style="left:313px;top:1022px;width:1690px;height:17px;background:#f1f1f1"></div>
<div class="a" style="left:313px;top:1022px;width:17px;height:17px;background:#e6e6e6"></div>
<div class="a" style="left:318px;top:1025px;width:0;height:0;border-top:5.5px solid transparent;border-bottom:5.5px solid transparent;border-right:6px solid #777"></div>
<div class="a" style="left:1986px;top:1022px;width:17px;height:17px;background:#e6e6e6"></div>
<div class="a" style="left:1992px;top:1025px;width:0;height:0;border-top:5.5px solid transparent;border-bottom:5.5px solid transparent;border-left:6px solid #777"></div>
<div class="a" style="left:683px;top:1023.5px;width:72px;height:14px;border-radius:7px;background:#dcdcdc;border:1.3px solid #a3a3a3"></div>
<div class="a" style="left:2002px;top:370px;width:17px;height:652px;background:#fbfbfb"></div><div class="a" style="left:2003px;top:370px;width:15px;height:15px;background:#efefef"></div><div class="a" style="left:2003px;top:1007px;width:15px;height:15px;background:#efefef"></div>
<div class="a" style="left:2004px;top:373px;width:0;height:0;border-left:6px solid transparent;border-right:6px solid transparent;border-bottom:6px solid #777"></div>
<div class="a" style="left:2004px;top:1011px;width:0;height:0;border-left:6px solid transparent;border-right:6px solid transparent;border-top:6px solid #777"></div>
<div class="a" style="left:2003px;top:386.5px;width:14px;height:593px;border-radius:7px;background:#dcdcdc;border:1.3px solid #a3a3a3"></div>
<div class="a" style="left:313px;top:1076px;width:1707px;height:35px;background:#f6f6f6"></div>
<div class="a" style="left:332px;top:1083px;font-size:17px;color:#1b1b1b;line-height:20px"><span style="letter-spacing:-0.02em">총합계</span>: 21/21</div>
<div class="a" style="right:47px;top:1083px;font-size:17px;color:#1b1b1b;line-height:20px"><span style="letter-spacing:-0.1em">선택한</span> <span style="letter-spacing:-0.1em">셀의</span> <span style="letter-spacing:-0.1em">개수</span> : 1, <span style="letter-spacing:-0.1em">선택한</span> <span style="letter-spacing:-0.1em">셀의</span> <span style="letter-spacing:-0.1em">합계</span> : 5,100,100,875,618</div>
<div class="btn" style="left:313px;top:1120px;width:190px;height:39px;text-align:left"><div class="a" style="left:11px;top:7.5px;font-size:15.5px;line-height:20px;color:#222;letter-spacing:-0.12em;word-spacing:3px">표 열 설정</div><div class="a" style="left:164px;top:16px;width:0;height:0;border-left:5.5px solid transparent;border-right:5.5px solid transparent;border-top:6px solid #4b4e55"></div></div>
<svg class="a" style="left:1092px;top:1182px" width="16" height="15" viewBox="0 0 16 15"><path d="M8 1 L2 7.5 L8 14 M14 1 L8 7.5 L14 14" fill="none" stroke="#7a7a7a" stroke-width="1.5"/></svg>
<svg class="a" style="left:1128px;top:1182px" width="10" height="15" viewBox="0 0 10 15"><path d="M8 1 L2 7.5 L8 14" fill="none" stroke="#7a7a7a" stroke-width="1.5"/></svg>
<div class="a" style="left:1153px;top:1175px;width:28px;height:40px;border:1.3px solid #222;font-size:14px;text-align:center;line-height:14px;padding-top:0px;color:#222">1</div>
<svg class="a" style="left:1196px;top:1182px" width="10" height="15" viewBox="0 0 10 15"><path d="M2 1 L8 7.5 L2 14" fill="none" stroke="#7a7a7a" stroke-width="1.5"/></svg>
<svg class="a" style="left:1225px;top:1182px" width="16" height="15" viewBox="0 0 16 15"><path d="M2 1 L8 7.5 L2 14 M8 1 L14 7.5 L8 14" fill="none" stroke="#7a7a7a" stroke-width="1.5"/></svg>
<div class="btn" style="left:1849px;top:1169px;width:172px;height:40px;text-align:left"><div class="a" style="left:10px;top:9px;font-size:17px;line-height:20px;color:#222;letter-spacing:0">100<span style="letter-spacing:-0.11em">개씩</span> <span style="letter-spacing:-0.11em">보기</span></div><div class="a" style="left:150px;top:18px;width:0;height:0;border-left:6px solid transparent;border-right:6px solid transparent;border-top:6px solid #111"></div></div>
<div class="a" style="left:1829px;top:979.5px;width:66px;height:66px;border-radius:27px;background:#0a4fd7;box-shadow:0 3px 9px rgba(0,0,0,0.16)">
<svg class="a" style="left:0;top:0" width="66" height="66" viewBox="0 0 66 66"><g fill="none" stroke="#fff"><circle cx="19.7" cy="25.6" r="6" stroke-width="5"/><circle cx="19.7" cy="42.7" r="6" stroke-width="5"/><circle cx="40.4" cy="27.7" r="7.4" stroke-width="5.6"/><path d="M17 31.5 L23.5 36.5" stroke-width="4.5"/></g><rect x="19.7" y="17.2" width="21" height="5.2" fill="#fff"/><circle cx="55.7" cy="33.2" r="3.1" fill="#55d64b"/></svg>
</div>
<svg class="a" style="left:0;top:1185px" width="16" height="16" viewBox="0 0 16 16"><path d="M0 2.5 A14 14 0 0 0 14 16.5 L0 16.5 Z" fill="#2a2614"/></svg>
<svg class="a" style="left:2032px;top:1185px" width="16" height="16" viewBox="0 0 16 16"><path d="M16 2.5 A14 14 0 0 1 2 16.5 L16 16.5 Z" fill="#2a2614"/></svg>
</body></html>
